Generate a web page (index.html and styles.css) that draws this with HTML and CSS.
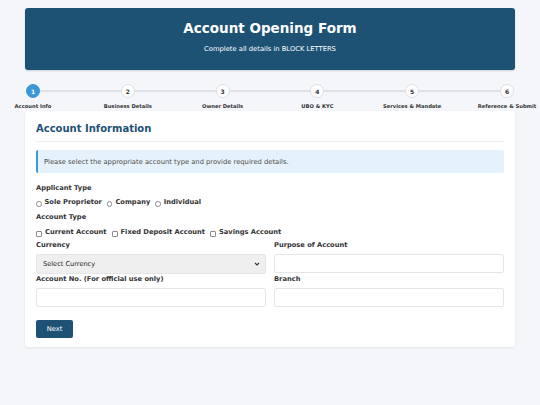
FILE: index.html
```html
<!DOCTYPE html>
<html>
<head>
<meta charset="utf-8">
<link rel="stylesheet" href="styles.css">
</head>
<body>
<div class="page">
  <header class="hero">
    <h1>Account Opening Form</h1>
    <p>Complete all details in BLOCK LETTERS</p>
  </header>
  <nav class="steps">
    <div class="line"></div>
    <div class="step active"><span class="dot">1</span><span class="lbl">Account Info</span></div>
    <div class="step"><span class="dot">2</span><span class="lbl">Business Details</span></div>
    <div class="step"><span class="dot">3</span><span class="lbl">Owner Details</span></div>
    <div class="step"><span class="dot">4</span><span class="lbl">UBO &amp; KYC</span></div>
    <div class="step"><span class="dot">5</span><span class="lbl">Services &amp; Mandate</span></div>
    <div class="step"><span class="dot">6</span><span class="lbl">Reference &amp; Submit</span></div>
  </nav>
  <section class="card">
    <h2>Account Information</h2>
    <div class="alert">Please select the appropriate account type and provide required details.</div>
    <div class="label">Applicant Type</div>
    <div class="opts">
      <label class="opt"><input type="radio" name="ap"> Sole Proprietor</label>
      <label class="opt"><input type="radio" name="ap"> Company</label>
      <label class="opt"><input type="radio" name="ap"> Individual</label>
    </div>
    <div class="label">Account Type</div>
    <div class="opts">
      <label class="opt"><input type="checkbox"> Current Account</label>
      <label class="opt"><input type="checkbox"> Fixed Deposit Account</label>
      <label class="opt"><input type="checkbox"> Savings Account</label>
    </div>
    <div class="grid">
      <div class="field">
        <div class="label">Currency</div>
        <div class="select"><span>Select Currency</span><svg width="6" height="4" viewBox="0 0 6 4"><path d="M1 1l2 2 2-2" fill="none" stroke="#333" stroke-width="1.1"/></svg></div>
      </div>
      <div class="field">
        <div class="label">Purpose of Account</div>
        <div class="input"></div>
      </div>
      <div class="field">
        <div class="label">Account No. (For official use only)</div>
        <div class="input"></div>
      </div>
      <div class="field">
        <div class="label">Branch</div>
        <div class="input"></div>
      </div>
    </div>
    <button class="btn">Next</button>
  </section>
</div>
</body>
</html>
```
FILE: styles.css
```css
* { box-sizing: border-box; }
html, body { margin: 0; padding: 0; }
body {
  background: #f4f6fa;
  font-family: "DejaVu Sans", Verdana, sans-serif;
  color: #333;
  width: 540px;
  height: 405px;
  overflow: hidden;
}
.page { padding: 8px 25px 0; }
.hero {
  background: #1d5275;
  border-radius: 3px;
  height: 62px;
  color: #fff;
  text-align: center;
  padding-top: 12px;
  box-shadow: 0 1px 2px rgba(0,0,0,0.15);
}
.hero h1 { margin: 0; font-size: 13.5px; font-weight: bold; line-height: 17px; }
.hero p { margin: 8px 0 0; font-size: 6.75px; line-height: 9px; }
.steps {
  position: relative;
  display: flex;
  justify-content: space-between;
  margin-top: 13px;
  padding-top: 1px;
  height: 28px;
}
.steps .line {
  position: absolute;
  left: 8px; right: 8px; top: 7px;
  height: 2px;
  background: #dfe2e6;
}
.step {
  position: relative;
  width: 16px;
  display: flex;
  flex-direction: column;
  align-items: center;
}
.dot {
  width: 14px; height: 14px;
  border-radius: 50%;
  background: #fff;
  border: 1px solid #dcdfe3;
  font-size: 6px;
  font-weight: bold;
  color: #333;
  display: flex; align-items: center; justify-content: center;
}
.step.active .dot { background: #3a97d8; border-color: #3a97d8; color: #fff; }
.lbl {
  margin-top: 5px;
  font-size: 5.2px;
  font-weight: bold;
  white-space: nowrap;
  color: #333;
}
.card {
  background: #fff;
  border-radius: 3px;
  box-shadow: 0 1px 3px rgba(0,0,0,0.08);
  padding: 11px 11px 10px;
  height: 236px;
}
.card h2 {
  margin: 0;
  font-size: 10px;
  line-height: 14px;
  color: #1d5275;
  padding-bottom: 5px;
  border-bottom: 1px solid #eceef0;
}
.alert {
  margin-top: 8px;
  background: #e6f2fb;
  border-left: 2px solid #3a97d8;
  border-radius: 2px;
  height: 23px;
  font-size: 6.75px;
  color: #4a4a4a;
  padding: 0 0 0 6px;
  display: flex; align-items: center;
}
.label {
  font-size: 6.7px;
  font-weight: bold;
  color: #333;
  line-height: 9px;
}
.alert + .label { margin-top: 11px; }
.opts { display: flex; gap: 5px; margin: 5px 0 6px; }
.opts + .label + .opts { margin-top: 6px; margin-bottom: 4px; }
.opt {
  font-size: 6.7px;
  font-weight: bold;
  display: flex; align-items: center;
  line-height: 9px;
}
.opt input {
  -webkit-appearance: none;
  appearance: none;
  margin: 0 3px 0 0;
  width: 6px; height: 6px;
  border: 1px solid #8a8a8a;
  background: #fff;
  flex: none;
}
.opt input[type=radio] { border-radius: 50%; width: 5.5px; height: 5.5px; margin-top: 3px; }
.opt input[type=checkbox] { border-radius: 1px; margin-top: 2px; }
.grid {
  display: grid;
  grid-template-columns: 1fr 1fr;
  column-gap: 8px;
  row-gap: 1px;
}
.field .label { margin-bottom: 4px; }
.select, .input {
  height: 19px;
  border: 1px solid #e3e5e8;
  border-radius: 2px;
  background: #fff;
}
.select {
  background: #efefef;
  height: 20px;
  display: flex; align-items: center; justify-content: space-between;
  padding: 0 5px 0 6px;
  font-size: 6.6px;
  color: #222;
}
.btn {
  margin-top: 13px;
  background: #1d5275;
  color: #fff;
  border: 0;
  border-radius: 2px;
  font-family: inherit;
  font-size: 6.7px;
  width: 37px;
  height: 18px;
  padding: 0;
}
```
